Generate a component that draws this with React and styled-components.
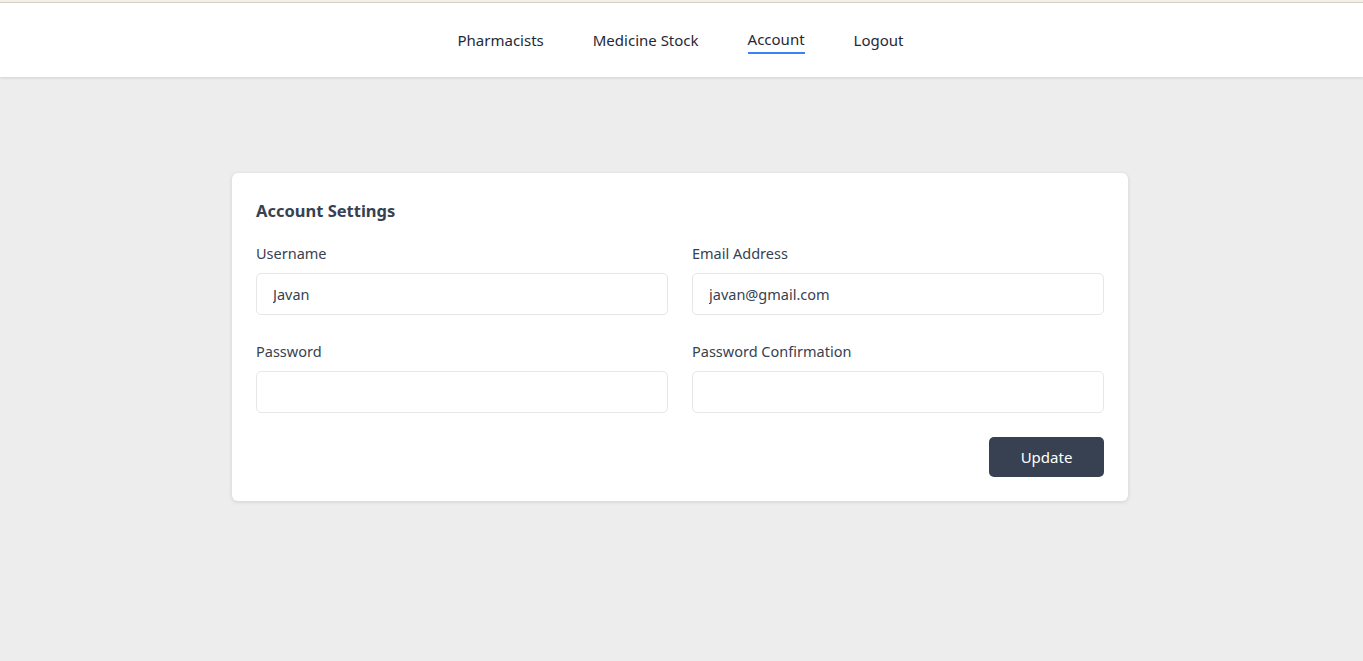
import React from 'react';
import styled, { createGlobalStyle } from 'styled-components';

const GlobalStyle = createGlobalStyle`
  html, body {
    margin: 0;
    padding: 0;
    background: #ededed;
    font-family: "Noto Sans", "Open Sans", sans-serif;
    color: #374151;
  }
  * { box-sizing: border-box; }
`;

const Page = styled.div`
  min-height: 100vh;
  background: #ededed;
  border-top: 2px solid #f4f1ee;
`;

const Header = styled.header`
  height: 75px;
  background: #ffffff;
  border-top: 1px solid #d9d0c6;
  box-shadow: 0 1px 3px rgba(0, 0, 0, 0.12);
  display: flex;
  justify-content: center;
  align-items: center;
  padding-top: 2px;
`;

const Nav = styled.nav`
  display: flex;
  gap: 49px;
  align-items: center;
  padding-right: 2px;
`;

const NavLink = styled.a`
  font-size: 15px;
  color: #1f2937;
  text-decoration: none;
  cursor: pointer;
  padding: 3px 0;
  border-bottom: 2px solid ${(p) => (p.$active ? '#3b82f6' : 'transparent')};
  position: relative;
  top: ${(p) => (p.$active ? '-1px' : '0')};
`;

const Main = styled.main`
  display: flex;
  justify-content: center;
  padding-top: 96px;
  padding-right: 3px;
`;

const Card = styled.section`
  width: 896px;
  background: #ffffff;
  border-radius: 6px;
  box-shadow: 0 1px 4px rgba(0, 0, 0, 0.12);
  padding: 26px 24px 24px;
`;

const Title = styled.h2`
  margin: 0 0 21px;
  font-size: 16.5px;
  font-weight: 700;
  color: #374151;
`;

const Grid = styled.div`
  display: grid;
  grid-template-columns: 1fr 1fr;
  column-gap: 24px;
  row-gap: 26px;
`;

const Field = styled.label`
  display: flex;
  flex-direction: column;
  gap: 10px;
  font-size: 14.5px;
  color: #374151;
`;

const Input = styled.input`
  height: 42px;
  border: 1px solid #e5e7eb;
  border-radius: 5px;
  padding: 0 16px;
  font-family: inherit;
  font-size: 14.5px;
  color: #374151;
  outline: none;
  background: #fff;
`;

const Actions = styled.div`
  display: flex;
  justify-content: flex-end;
  margin-top: 24px;
`;

const Button = styled.button`
  width: 115px;
  height: 40px;
  border: none;
  border-radius: 5px;
  background: #374151;
  color: #ffffff;
  font-family: inherit;
  font-size: 15px;
  cursor: pointer;
`;

export default function App() {
  return (
    <>
      <GlobalStyle />
      <Page>
        <Header>
          <Nav>
            <NavLink>Pharmacists</NavLink>
            <NavLink>Medicine Stock</NavLink>
            <NavLink $active>Account</NavLink>
            <NavLink>Logout</NavLink>
          </Nav>
        </Header>
        <Main>
          <Card>
            <Title>Account Settings</Title>
            <Grid>
              <Field>
                Username
                <Input defaultValue="Javan" />
              </Field>
              <Field>
                Email Address
                <Input defaultValue="javan@gmail.com" />
              </Field>
              <Field>
                Password
                <Input type="password" />
              </Field>
              <Field>
                Password Confirmation
                <Input type="password" />
              </Field>
            </Grid>
            <Actions>
              <Button>Update</Button>
            </Actions>
          </Card>
        </Main>
      </Page>
    </>
  );
}
